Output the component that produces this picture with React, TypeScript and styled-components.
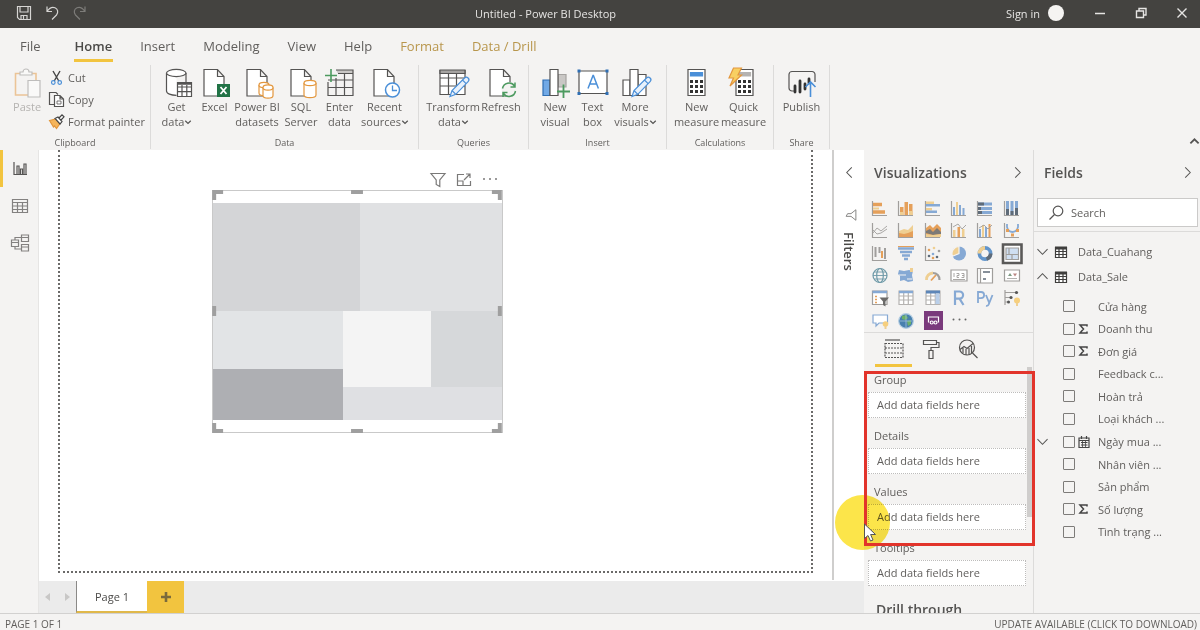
import React from "react";
import styled, { createGlobalStyle } from "styled-components";

const c = {
  title: "#444340",
  bar: "#f4f3f2",
  line: "#dcdbda",
  text: "#605e5c",
  ink: "#555453",
  blue: "#4a8fd8",
  orange: "#e3973e",
  yellow: "#f2c43f",
  green: "#4c9a5f",
};

const GlobalStyle = createGlobalStyle`
  * { box-sizing: border-box; }
  body { margin: 0; background: ${c.bar}; color: ${c.text}; font: 11px/15px "Open Sans", "Noto Sans", sans-serif; }
  button { font: inherit; color: inherit; background: none; border: 0; padding: 0; margin: 0; }
  svg { display: block; fill: none; flex: none; overflow: visible; }
  h2, h3 { margin: 0; }
  ul { margin: 0; padding: 0; list-style: none; }
`;

const Shell = styled.div`
  display: flex;
  flex-direction: column;
  height: 100vh;
  min-height: 480px;
  overflow: hidden;
`;

/* ---------- title bar ---------- */
const TitleBar = styled.header`
  display: grid;
  grid-template-columns: 1fr auto 1fr;
  align-items: center;
  height: 28px;
  flex: none;
  padding: 0 9px 2px 16px;
  background: ${c.title};
  color: #e6e5e3;
`;
const QuickAccess = styled.div`
  display: flex;
  gap: 12px;
`;
const WindowControls = styled.div`
  display: flex;
  align-items: center;
  justify-content: flex-end;
`;
const SignIn = styled.button`
  display: flex;
  align-items: center;
  gap: 8px;
  margin-right: 27px;
`;
const Avatar = styled.span`
  width: 16px;
  height: 16px;
  border-radius: 50%;
  background: #f5f4f2;
`;
const WindowButton = styled.button`
  display: grid;
  place-items: center;
  width: 18px;
  height: 20px;
  & + & { margin-left: 23px; }
`;
const DocTitle = styled.div`
  padding-right: 116px;
  white-space: nowrap;
`;

/* ---------- ribbon ---------- */
const Tabs = styled.nav`
  display: flex;
  align-items: flex-start;
  gap: 26px;
  height: 37px;
  flex: none;
  padding: 7px 0 0 19px;
  font-size: 13px;
  line-height: 22px;
`;
const Tab = styled.button<{ $active?: boolean; $accent?: boolean }>`
  height: 27px;
  padding: 0 1px 5px;
  font-weight: ${(p) => (p.$active ? 600 : 400)};
  color: ${(p) => (p.$accent ? "#b8964c" : p.$active ? "#4b4a48" : c.text)};
  border-bottom: 3px solid ${(p) => (p.$active ? c.yellow : "transparent")};
`;
const FileTab = styled(Tab)`
  margin-right: 6px;
`;
const Ribbon = styled.div`
  display: flex;
  align-items: stretch;
  height: 85px;
  flex: none;
`;
const Group = styled.section<{ $w: number }>`
  display: flex;
  flex-direction: column;
  align-items: center;
  justify-content: space-between;
  width: ${(p) => p.$w}px;
  margin-bottom: 1px;
  border-right: 1px solid ${c.line};
`;
const Tools = styled.div`
  display: flex;
`;
const GroupName = styled.div`
  font-size: 9px;
  line-height: 12px;
`;
const Tool = styled.button<{ $w: number; $dim?: boolean }>`
  display: flex;
  flex-direction: column;
  align-items: center;
  width: ${(p) => p.$w}px;
  padding-top: 2px;
  gap: 2px;
  white-space: nowrap;
  color: ${(p) => (p.$dim ? "#b5b3b1" : c.text)};
`;
const ToolText = styled.span`
  display: flex;
  flex-direction: column;
  align-items: center;
`;
const ToolLine = styled.span`
  display: flex;
  align-items: center;
  gap: 1px;
`;
const ClipList = styled.div`
  display: flex;
  flex-direction: column;
  padding-top: 1px;
`;
const ClipButton = styled.button`
  display: flex;
  align-items: center;
  gap: 4px;
  height: 22px;
`;
const Collapse = styled.button`
  margin: auto 1px 4px auto;
`;

/* ---------- workspace ---------- */
const Workspace = styled.main`
  display: flex;
  flex: 1;
  min-height: 0;
`;
const Rail = styled.nav`
  display: flex;
  flex-direction: column;
  width: 39px;
  flex: none;
  border-right: 1px solid #e6e5e4;
`;
const RailButton = styled.button<{ $active?: boolean }>`
  display: grid;
  place-items: center;
  height: 37px;
  padding-right: 2px;
  border-left: 3px solid ${(p) => (p.$active ? c.yellow : "transparent")};
`;
const Center = styled.div`
  display: flex;
  flex-direction: column;
  flex: 1;
  min-width: 0;
`;
const Stage = styled.div`
  display: flex;
  flex: 1;
  min-height: 0;
  background: #fff;
`;
const CanvasArea = styled.div`
  flex: 1;
  padding: 0 19px 7px 19px;
  border-right: 2px solid #cfcecd;
  margin-bottom: 1px;
`;
const ReportPage = styled.div`
  position: relative;
  height: 100%;
  border: 2px dotted #6b6a69;
  border-top: 0;
`;
const Visual = styled.div`
  position: absolute;
  left: 152px;
  top: 40px;
  width: 291px;
  height: 243px;
  padding: 12px 0;
  border: 1px solid #c9c9c9;
`;
const VisualActions = styled.div`
  position: absolute;
  right: 4px;
  top: -19px;
  display: flex;
  align-items: center;
  gap: 11px;
`;
const Handles = styled.svg`
  position: absolute;
  left: -1px;
  top: -1px;
  width: 291px;
  height: 243px;
`;
const TreeMap = styled.div`
  display: flex;
  flex-direction: column;
  height: 217px;
`;
const Split = styled.div<{ $size: number; $dir?: "row" | "column" }>`
  display: flex;
  flex: ${(p) => p.$size} 1 0;
  flex-direction: ${(p) => p.$dir ?? "row"};
`;
const Cell = styled.div<{ $size: number; $tone: string }>`
  flex: ${(p) => p.$size} 1 0;
  background: ${(p) => p.$tone};
`;
const Filters = styled.aside`
  display: flex;
  flex-direction: column;
  align-items: center;
  width: 30px;
  flex: none;
  padding-top: 17px;
`;
const FilterMark = styled.span`
  margin: 31px 0 11px 3px;
  transform: rotate(90deg);
`;
const FiltersTitle = styled.h2`
  writing-mode: vertical-rl;
  font-size: 13px;
  line-height: 16px;
  font-weight: 600;
  color: #4b4a48;
`;
const PageTabs = styled.div`
  display: flex;
  height: 32px;
  flex: none;
  background: #ebebeb;
`;
const PageArrows = styled.div`
  display: flex;
  align-items: center;
  justify-content: space-around;
  width: 37px;
`;
const PageTab = styled.button`
  width: 71px;
  background: #fff;
  border-left: 1px solid #8a8987;
  border-bottom: 2px solid #e0b84a;
  color: #4b4a48;
`;
const AddPage = styled.button`
  display: grid;
  place-items: center;
  width: 37px;
  background: ${c.yellow};
`;

/* ---------- side panels ---------- */
const VizPanel = styled.aside`
  position: relative;
  display: flex;
  flex-direction: column;
  width: 169px;
  flex: none;
`;
const PanelHead = styled.div`
  display: flex;
  align-items: center;
  justify-content: space-between;
  height: 45px;
  flex: none;
  padding: 0 10px 0 10px;
`;
const FieldsHead = styled(PanelHead)`
  padding-right: 7px;
`;
const PanelTitle = styled.h2`
  font-size: 14px;
  line-height: 20px;
  font-weight: 600;
  color: ${c.ink};
`;
const VizGrid = styled.div`
  display: grid;
  grid-template-columns: repeat(6, 1fr);
  grid-auto-rows: 1fr;
  height: 138px;
  flex: none;
  padding: 3px 8px 0 3px;
  border-bottom: 1px solid ${c.line};
`;
const VizButton = styled.button`
  display: grid;
  place-items: center;
`;
const PaneTabs = styled.div`
  display: flex;
  height: 34px;
  flex: none;
  padding: 1px 0 0 11px;
`;
const PaneTab = styled.button<{ $active?: boolean }>`
  display: grid;
  place-items: center;
  width: 37px;
  border-bottom: 3px solid ${(p) => (p.$active ? c.yellow : "transparent")};
`;
const Wells = styled.div`
  display: flex;
  flex: 1;
  min-height: 0;
  overflow: hidden;
`;
const WellList = styled.div`
  flex: 1;
  padding: 5px 0 0 4px;
`;
const WellLabel = styled.h3`
  padding: 0 0 4px 6px;
  font-size: 11px;
  line-height: 16px;
  font-weight: 400;
`;
const Well = styled.div`
  height: 26px;
  margin-bottom: 10px;
  padding: 0 8px;
  line-height: 24px;
  background: #fff;
  border: 1px dotted #bdbcbb;
`;
const DrillTitle = styled.h2`
  padding: 5px 0 0 8px;
  font-size: 14px;
  line-height: 18px;
  font-weight: 600;
  color: ${c.ink};
`;
const Scrollbar = styled.div`
  width: 5px;
  height: 150px;
  margin: 0 1px;
  background: #cfcdcc;
`;
const Highlight = styled.div`
  position: absolute;
  left: 0;
  top: 221px;
  width: 171px;
  height: 175px;
  border: 3px solid #e2342b;
  z-index: 2;
`;
const ClickSpot = styled.div`
  position: absolute;
  left: -29px;
  top: 345px;
  width: 55px;
  height: 55px;
  border-radius: 50%;
  background: #fce54a;
  mix-blend-mode: multiply;
  z-index: 1;
`;
const Pointer = styled.svg`
  position: absolute;
  left: 0;
  top: 373px;
  width: 12px;
  height: 19px;
  z-index: 3;
`;
const FieldsPanel = styled.aside`
  width: 167px;
  flex: none;
  border-left: 1px solid ${c.line};
`;
const SearchRow = styled.div`
  padding: 3px 2px 4px 3px;
  border-bottom: 1px solid ${c.line};
`;
const SearchBox = styled.label`
  display: flex;
  align-items: center;
  gap: 7px;
  height: 29px;
  padding-left: 11px;
  background: #fff;
  border: 1px solid #cbcac9;
`;
const SearchInput = styled.input`
  width: 100px;
  padding: 0;
  border: 0;
  outline: 0;
  background: none;
  font: inherit;
  color: ${c.text};
  &::placeholder { color: ${c.text}; opacity: 1; }
`;
const Tables = styled.div`
  padding-top: 7px;
`;
const TableRow = styled.button`
  display: grid;
  grid-template-columns: 18px 23px auto;
  align-items: center;
  justify-content: start;
  width: 100%;
  height: 25px;
  padding-left: 3px;
  text-align: left;
`;
const FieldList = styled.ul`
  display: grid;
  grid-auto-rows: 1fr;
  height: 248px;
  margin-top: 6px;
`;
const Field = styled.li`
  display: grid;
  grid-template-columns: 26px 1fr;
  align-items: center;
  padding-left: 3px;
`;
const FieldLabel = styled.label`
  display: grid;
  grid-template-columns: 15px 20px auto;
  align-items: center;
  justify-content: start;
  white-space: nowrap;
`;
const Check = styled.input`
  appearance: none;
  width: 12px;
  height: 12px;
  margin: 0;
  border: 1px solid #7d7b79;
  border-radius: 1px;
`;
const Status = styled.footer`
  display: flex;
  justify-content: space-between;
  height: 17px;
  flex: none;
  padding: 2px 3px 0 5px;
  border-top: 1px solid #d2d1d0;
  font-size: 10px;
  line-height: 16px;
`;

/* ---------- icons ---------- */
const Svg = ({ w = 30, h = 30, children, stroke = c.ink }: { w?: number; h?: number; stroke?: string; children: React.ReactNode }) => (
  <svg width={w} height={h} viewBox={`0 0 ${w} ${h}`} stroke={stroke} strokeWidth="1.2" aria-hidden="true">
    {children}
  </svg>
);
const Chevron = ({ dir, w = 11, bold }: { dir: "left" | "right" | "up" | "down"; w?: number; bold?: boolean }) => {
  const turn = { right: 0, down: 90, left: 180, up: 270 }[dir];
  return (
    <svg width={w} height={w} viewBox="0 0 12 12" stroke={c.ink} strokeWidth={bold ? 2.4 : 1.1} aria-hidden="true">
      <path d="M3.5 0.5 9 6 3.5 11.5" transform={`rotate(${turn} 6 6)`} />
    </svg>
  );
};
const Sheet = () => <path d="M4 2.5H17.5L24 9.5V29H4ZM17.5 2.5V9.5H24" fill="#fff" />;
const Cylinder = ({ x, y, w, h, stroke }: { x: number; y: number; w: number; h: number; stroke?: string }) => (
  <g stroke={stroke} fill="#fff">
    <path d={`M${x} ${y}v${h}a${w / 2} 2.6 0 0 0 ${w} 0v${-h}`} />
    <ellipse cx={x + w / 2} cy={y} rx={w / 2} ry="2.6" />
  </g>
);
const Pencil = () => (
  <g stroke={c.blue} fill="#e8f1fb">
    <path d="M12 29.5 14 23.5 26.5 11a2.3 2.3 0 0 1 3.6 3.6L17.8 27.3ZM14 23.5l3.8 3.8M24.5 13l3.6 3.6" />
  </g>
);
const GridSheet = () => (
  <>
    <path d="M2 3.5H27V27.5H2ZM2 11H27M2 19H27M10.5 7V27.5M18.5 7V27.5" fill="#fff" />
    <path d="M2 3H27V6.5H2Z" fill="#a5a3a1" />
  </>
);
const Calculator = ({ screen = c.blue }: { screen?: string }) => (
  <>
    <path d="M6 2.5H23V28.5H6Z" fill="#fff" />
    <path d="M8.5 5.5H20.5V9H8.5Z" fill={screen} stroke={screen} />
    {[13, 18, 23].map((y) => [8, 13, 18].map((x) => <rect key={`${x}-${y}`} x={x} y={y} width="3" height="3" fill="#333" stroke="none" />))}
  </>
);

const toolIcons: Record<string, React.ReactNode> = {
  paste: (
    <g opacity="0.5">
      <path d="M3.5 6.5H24V28H3.5Z" stroke={c.orange} strokeWidth="1.6" />
      <path d="M8 8V5h3a3 3 0 0 1 6 0h3v3Z" fill="#fff" stroke="#8a8987" />
      <path d="M16 13.5H28V30H16Z" fill="#fff" stroke="#8a8987" />
    </g>
  ),
  get: (
    <>
      <path d="M4.5 6V24c0 2.5 4.5 4 10 4V6" fill="#fff" stroke="none" />
      <path d="M4.5 6V24c0 2.6 4.5 4.3 10 4.3M24 6V15" />
      <ellipse cx="14.25" cy="6" rx="9.75" ry="3.6" fill="#fff" />
      <path d="M15.5 15.5H29.5V29.5H15.5ZM15.5 20H29.5M15.5 24.7H29.5M20 18V29.5M24.8 18V29.5" fill="#fff" />
      <path d="M15.5 16.5H29.5" strokeWidth="2.5" />
    </>
  ),
  excel: (
    <>
      <Sheet />
      <rect x="17" y="17" width="13" height="13" fill="#217346" stroke="none" />
      <path d="m20.5 20 6 7M26.5 20l-6 7" stroke="#fff" strokeWidth="1.8" />
    </>
  ),
  datasets: (
    <g transform="translate(1 0)">
      <Sheet />
      <Cylinder x={16} y={18} w={10} h={8} stroke={c.orange} />
      <Cylinder x={20} y={20.5} w={10} h={8} stroke={c.orange} />
    </g>
  ),
  sql: (
    <g transform="translate(1 0)">
      <Sheet />
      <Cylinder x={17} y={16} w={12} h={12} stroke={c.orange} />
    </g>
  ),
  enter: (
    <>
      <path d="M3 15V28.5H28V7M3 13H28M3 20.5H28M11 11V28.5M19.5 7V28.5" fill="none" />
      <path d="M11 3H28V6.5H13" fill="#c9c7c5" />
      <path d="M0 8.5H12M6 2V15" stroke={c.green} strokeWidth="1.6" />
    </>
  ),
  recent: (
    <>
      <Sheet />
      <circle cx="22.5" cy="23" r="7" fill="#fff" stroke={c.blue} strokeWidth="1.5" />
      <path d="M22.5 18.5V23.5H27" stroke={c.blue} strokeWidth="1.3" />
    </>
  ),
  transform: (
    <>
      <GridSheet />
      <Pencil />
    </>
  ),
  refresh: (
    <>
      <Sheet />
      <circle cx="23" cy="22.5" r="7.5" fill={c.bar} stroke="none" />
      <path d="M16.5 21.5a6.6 6.6 0 0 1 12-2.5M29 15.5V20H24.5M29.5 24a6.6 6.6 0 0 1-12 2.5M17 30V25.5H21.5" stroke={c.green} strokeWidth="1.5" />
    </>
  ),
  visual: (
    <>
      <path d="M3 13H10V28.5H3Z" fill="#71a9e6" stroke="#2f6fb4" />
      <path d="M18 7.5H26V20H18Z" fill="#c9c7c5" stroke="#a5a3a1" />
      <path d="M10 2.5H18V28.5H10Z" fill="#fff" />
      <path d="M17 24.5H30M23.5 17.5V31" stroke={c.green} strokeWidth="1.8" />
    </>
  ),
  text: (
    <>
      <path d="M1 4H29V26.5H1Z" fill="#fff" />
      <path d="m10 21.5 5-13h.4l5 13M11.7 17h7" stroke={c.blue} strokeWidth="1.5" />
      {[[1, 4], [29, 4], [1, 26.5], [29, 26.5]].map(([x, y]) => (
        <rect key={`${x}-${y}`} x={x - 1.5} y={y - 1.5} width="3" height="3" fill="#2f6fb4" stroke="none" />
      ))}
    </>
  ),
  more: (
    <>
      <path d="M3 13H10V28.5H3ZM18 7.5H26V28.5H18Z" fill="#fff" />
      <path d="M10 2.5H18V28.5H10Z" fill="#fff" />
      <Pencil />
    </>
  ),
  calc: <Calculator />,
  quick: (
    <>
      <g transform="translate(1 0)">
        <Calculator screen="#b5b3b1" />
      </g>
      <path d="M4.500 1H12.500L9 8H12.500L1 19 4.500 11H0Z" fill="#f8cf62" stroke={c.orange} />
    </>
  ),
  publish: (
    <>
      <path d="M9 24H5A3 3 0 0 1 2 21V7.5A3 3 0 0 1 5 4.5H25A3 3 0 0 1 28 7.5V15" />
      <path d="M8 19V25M13 14V25M18 17V22M22 12V16" stroke="#333" strokeWidth="2.8" strokeLinecap="round" />
      <path d="M23.5 30V15M18.5 20 23.5 15 28.5 20" stroke={c.blue} strokeWidth="1.6" />
    </>
  ),
};

const clipIcons: Record<string, React.ReactNode> = {
  cut: (
    <>
      <path d="M4 1 9.8 11M11 1 5.2 11" stroke="#444" strokeWidth="1.4" />
      <circle cx="4.3" cy="12.5" r="1.8" stroke={c.blue} />
      <circle cx="10.7" cy="12.5" r="1.8" stroke={c.blue} />
    </>
  ),
  copy: (
    <>
      <path d="M5 12.5H.5V.5H7L9 2.5" />
      <path d="M5.5 3.5H11L14.5 7V14.5H5.5ZM11 3.5V7H14.5" fill="#fff" />
      <path d="M8 9H12V12H8Z" strokeWidth=".8" />
    </>
  ),
  painter: (
    <>
      <path d="M.5 6.500 7 5 11 9.500 7.500 14.500 5.500 12 4.500 13Z" fill="#f5b55c" stroke={c.orange} />
      <path d="m6 4.5 3-1.500 4 4.500-2 2.500ZM10 4 13 .8 15 2.8 12 6" fill="#fff" stroke="#444" />
    </>
  ),
};

const O = "#e5a05a";
const B = "#86a9d4";
const Y = "#efcf92";
const G = "#a09e9c";
const D = "#5f6b78";
const axes = <path d="M1.5 1V15.5H16" stroke={G} />;
const hbars = (rows: [number, number, string][]) =>
  rows.map(([y, w, f], i) => <rect key={i} x="2" y={y} width={w} height="2.5" fill={f} stroke="none" />);
const vbars = (cols: [number, number, string][], bw = 2) =>
  cols.map(([x, h, f], i) => <rect key={i} x={x} y={15 - h} width={bw} height={h} fill={f} stroke="none" />);
const sheetGrid = <path d="M2 2H16V15.5H2ZM2 7H16M2 11H16M6.7 3V15.5M11.3 3V15.5" stroke="#b5b3b1" fill="#fff" />;

const vizIcons: [string, React.ReactNode][] = [
  ["Stacked bar chart", <>{axes}<path d="M2 4.5H11M2 12H14" stroke={O} strokeWidth="3.5" /><path d="M2 8.5H8" stroke={Y} strokeWidth="2" /></>],
  ["Stacked column chart", <>{axes}{vbars([[3, 8, O], [7.5, 13, O], [12, 11, O]], 3.5)}{vbars([[3, 3, Y], [12, 4, Y]], 3.5)}</>],
  ["Clustered bar chart", <>{axes}{hbars([[1.5, 8, Y], [4, 14, B], [8, 6, Y], [10.5, 11, B]])}</>],
  ["Clustered column chart", <>{axes}{vbars([[3, 8, B], [6, 13, Y], [9, 10, B], [12.5, 7, B]], 2)}</>],
  ["100% stacked bar chart", <>{axes}<path d="M2 4H16M2 8.5H16M2 12.5H16" stroke={B} strokeWidth="3" /><path d="M2 4H8M2 12.5H6M2 8.5H5" stroke={D} strokeWidth="3" /></>],
  ["100% stacked column chart", <>{axes}<path d="M4.5 1V15M9 1V15M13.5 1V15" stroke={B} strokeWidth="3" /><path d="M4.5 9V15M9 11V15M13.5 8V15" stroke={D} strokeWidth="3" /></>],
  ["Line chart", <>{axes}<path d="m2 11 4-5 4 3 6-5M2 8l4 4 4-1 6-4" stroke={G} strokeWidth=".9" /></>],
  ["Area chart", <>{axes}<path d="M2 15V9L7 7l4 1 5-5V15Z" fill={Y} stroke="none" /><path d="M2 15V11l5 1 4-1 5-2v6Z" fill={O} stroke="none" /></>],
  ["Stacked area chart", <>{axes}<path d="M2 6 6 3 9 6l4-4 4 4V15H2Z" fill={O} stroke="none" /><path d="m2 9 4-2 3 3 4-4 4 4v2L9 13 2 11Z" fill="#7d7a76" stroke="none" /><path d="m2 12 7 1 8-1v3H2Z" fill={Y} stroke="none" /></>],
  ["Line and stacked column chart", <>{axes}{vbars([[3, 7, Y], [7.5, 10, O], [12, 8, Y]], 2.5)}<path d="m3 5 5-3 4 5 4-4" stroke={G} strokeWidth=".9" /></>],
  ["Line and clustered column chart", <>{axes}{vbars([[3, 8, B], [6, 12, Y], [9, 10, B], [12.5, 13, O]], 2)}<path d="m3 6 5-3 4 4 4-4" stroke={G} strokeWidth=".9" /></>],
  ["Ribbon chart", <>{axes}<path d="M4 2V5c1 4 3 5 5.500 5s4.500-1 5.500-5V2" stroke={B} strokeWidth="1.8" /><path d="M3 8.500H6M8 13h3M13 8.500h3" stroke={O} strokeWidth="3" /></>],
  ["Waterfall chart", <>{axes}<path d="M4.5 2V12M8.5 2V8M14 3V14" stroke={G} strokeWidth="2" /><path d="M11 6V13" stroke={O} strokeWidth="2" /></>],
  ["Funnel", <><path d="M1 3.5H17M3 7H15" stroke={B} strokeWidth="2.6" /><path d="M1 1.5H17" stroke={O} strokeWidth="1" /><path d="M5 10.5H13M7 14H11" stroke={B} strokeWidth="2.3" /></>],
  ["Scatter chart", <>{axes}{[[5, 5, O], [5, 11, D], [9, 9, B], [10, 3, Y], [13, 12, D], [15, 6, G], [9, 13, O]].map(([x, y, f], i) => <circle key={i} cx={x} cy={y} r="1.3" fill={String(f)} stroke="none" />)}</>],
  ["Pie chart", <><circle cx="9" cy="8.5" r="7" fill={B} stroke="none" /><path d="M9 8.5V1.5A7 7 0 0 0 2.5 11.2Z" fill={Y} stroke={c.bar} /></>],
  ["Donut chart", <><circle cx="9" cy="8.5" r="5.6" stroke="#6295cb" strokeWidth="3.6" /><path d="M9 2.9A5.6 5.6 0 0 0 3.4 8.5" stroke={Y} strokeWidth="3.6" /><path d="M14.6 8.5A5.6 5.6 0 0 1 10.5 13.9" stroke={D} strokeWidth="3.6" /></>],
  ["Treemap", <><path d="M0 -.500H18.500V18H0Z" fill="#fff" stroke="#5a5958" strokeWidth="2.6" /><path d="M3 3H15.5V14.5H3ZM3 9.5H15.5M6 3V9.5M9 9.5V14.500" stroke={G} fill="#cfdff2" /></>],
  ["Map", <g stroke="#6f9aa8"><circle cx="9" cy="8.5" r="7" /><ellipse cx="9" cy="8.5" rx="3.3" ry="7" /><path d="M2 8.5H16M3 5H15M3 12H15" strokeWidth=".9" /></g>],
  ["Filled map", <><path d="M2 3 7 4l5-1 4 1-1 4 1 6-5 1-4-2-4 1V9L1 7Z" fill={B} stroke="none" /><path d="M2 8H9M10 12H15" stroke="#f6f5f4" /><path d="M13 1h3v4h-3Z" fill={Y} stroke="none" /></>],
  ["Gauge", <><path d="M2.5 13A6.5 6.5 0 0 1 9 6" stroke={Y} strokeWidth="2.8" /><path d="M9 6a6.5 6.5 0 0 1 6.500 7" stroke={G} strokeWidth="2.200" /><path d="M7 13.500 12 8" stroke={O} strokeWidth="1.8" /></>],
  ["Card", <><path d="M1 3H17V14H1Z" stroke={G} fill="#fff" /><path d="M4 6V10M6.5 6.5H9V8.5H7V10.500H9M11.500 6.5H14V10.500H11.500M12 8.5H14M3 12.500H15" stroke={G} strokeWidth=".9" /></>],
  ["Multi-row card", <><path d="M1.5 1.5H16.5V16H1.5ZM4.5 1.5V16" stroke={G} fill="#fff" /><path d="M7 5H14M7 12H10" stroke={D} strokeWidth="1.600" /></>],
  ["KPI", <><path d="M1.5 3H16.5V14H1.5Z" stroke={G} fill="#fff" /><path d="m5 9 2-3 2 3Z" fill="#7f9c85" stroke="none" /><path d="m10 6.5 2 3 2-3Z" fill="#b98582" stroke="none" /><path d="M4 11.500H14" stroke={G} strokeWidth=".8" /></>],
  ["Slicer", <><path d="M1.5 2H16V15.5H1.5Z" stroke={G} fill="#fff" /><path d="M1.5 3H16" stroke={B} strokeWidth="2.5" /><path d="M4 7.5H6M4 10.500H6M4 13.500H6" stroke={O} strokeWidth="1.5" /><path d="M8.500 8.500H18L14.500 12.500V17.500L12 16V12.500Z" fill="#6b6a69" stroke="none" /></>],
  ["Table", <>{sheetGrid}<path d="M2 3H16" stroke={B} strokeWidth="2.5" /></>],
  ["Matrix", <>{sheetGrid}<path d="M2 3H16" stroke="#5d86b8" strokeWidth="3" /><path d="M13.500 5V15" stroke="#b9cfea" strokeWidth="4" /></>],
  ["R script visual", <path d="M5 16V2.5H9.500a3.600 3.600 0 0 1 0 7.200H5M9.500 9.700 13.500 16" stroke={B} strokeWidth="2.2" />],
  ["Python visual", <path d="M2 14V3H5a3 3 0 0 1 0 6.200H2M10 6l3 7.500M16.500 6 12.600 15.600q-.800 1.600-2.600 1.200" stroke={B} strokeWidth="1.8" />],
  ["Key influencers", <><path d="M2 1V16M2 3.500H13M2 8.500H9M2 13H7" stroke={G} /><circle cx="13.500" cy="3.500" r="1.600" fill="#555" stroke="none" /><circle cx="8" cy="8.500" r="1.600" fill="#555" stroke="none" /><circle cx="5.500" cy="13" r="1.500" fill="#555" stroke="none" /><circle cx="14" cy="11.500" r="3" fill="#f6cf7e" stroke="none" /><path d="M14 14V17" stroke={Y} strokeWidth="2" /></>],
  ["Q&A", <><path d="M2 3H16.500V11H8L5 14V11H2Z" stroke={B} fill="#fff" /><circle cx="14.500" cy="12" r="2.800" fill="#f6cf7e" stroke="none" /><path d="M14.500 14V17" stroke={Y} strokeWidth="2" /></>],
  ["ArcGIS map", <><circle cx="9" cy="9" r="7.300" fill="#4880ae" stroke="#b4cde2" /><path d="M5 4 9 3l2 3-3 2-3-1ZM10 9l4-1v4l-3 2Z" fill="#6cb168" stroke="none" /><path d="M3 9H15M9 2V16" stroke="#9fc0dc" strokeWidth=".8" /></>],
  ["Power Apps", <><rect x="0" y="-1" width="19" height="19" fill="#7a3a7c" stroke="none" /><path d="M4.500 10.500V5H14.500V10.500" stroke="#fff" /><circle cx="7.700" cy="10.500" r="1.500" stroke="#fff" /><circle cx="11.500" cy="10.500" r="1.500" stroke="#fff" /></>],
  ["Get more visuals", <g fill="#666" stroke="none"><circle cx="3.500" cy="7.500" r="1" /><circle cx="9.500" cy="7.500" r="1" /><circle cx="15.500" cy="7.500" r="1" /></g>],
];

const TableGlyph = () => (
  <Svg w={12} h={12} stroke="#3f3e3d">
    <path d="M.5 1V11.500H11.500V1M.5 5.500H11.500M.5 8.500H11.500M4 3V11.500M8 3V11.500" fill="#fff" />
    <path d="M0 2H12" strokeWidth="3" />
  </Svg>
);
const FunnelGlyph = ({ w }: { w: number }) => (
  <svg width={w} height={w} viewBox="0 0 16 16" stroke="#7a7978" strokeWidth="1.2" aria-hidden="true">
    <path d="M1 1.500H15L9.800 8V14.500L6.200 12.500V8Z" />
  </svg>
);

/* ---------- data ---------- */
type ToolDef = { icon: string; w: number; lines: string[]; menu?: boolean };
const groups: { name: string; w: number; tools: ToolDef[] }[] = [
  {
    name: "Data",
    w: 268,
    tools: [
      { icon: "get", w: 38, lines: ["Get", "data"], menu: true },
      { icon: "excel", w: 38, lines: ["Excel"] },
      { icon: "datasets", w: 47, lines: ["Power BI", "datasets"] },
      { icon: "sql", w: 41, lines: ["SQL", "Server"] },
      { icon: "enter", w: 36, lines: ["Enter", "data"] },
      { icon: "recent", w: 54, lines: ["Recent", "sources"], menu: true },
    ],
  },
  {
    name: "Queries",
    w: 110,
    tools: [
      { icon: "transform", w: 55, lines: ["Transform", "data"], menu: true },
      { icon: "refresh", w: 41, lines: ["Refresh"] },
    ],
  },
  {
    name: "Insert",
    w: 138,
    tools: [
      { icon: "visual", w: 38, lines: ["New", "visual"] },
      { icon: "text", w: 37, lines: ["Text", "box"] },
      { icon: "more", w: 48, lines: ["More", "visuals"], menu: true },
    ],
  },
  {
    name: "Calculations",
    w: 107,
    tools: [
      { icon: "calc", w: 47, lines: ["New", "measure"] },
      { icon: "quick", w: 47, lines: ["Quick", "measure"] },
    ],
  },
  { name: "Share", w: 56, tools: [{ icon: "publish", w: 44, lines: ["Publish"] }] },
];

const fields: { name: string; kind?: "sum" | "date" }[] = [
  { name: "Cửa hàng" },
  { name: "Doanh thu", kind: "sum" },
  { name: "Đơn giá", kind: "sum" },
  { name: "Feedback c..." },
  { name: "Hoàn trả" },
  { name: "Loại khách ..." },
  { name: "Ngày mua ...", kind: "date" },
  { name: "Nhân viên ..." },
  { name: "Sản phẩm" },
  { name: "Số lượng", kind: "sum" },
  { name: "Tình trạng ..." },
];

export default function App() {
  return (
    <Shell>
      <GlobalStyle />
      <TitleBar>
        <QuickAccess>
          <button aria-label="Save">
            <Svg w={16} h={16} stroke="#d6d5d3">
              <path d="M1.500 1.500H14.500V14.500H3.500L1.500 12.500ZM4 1.500V7H12V1.500M5 14.500V10.500H11V14.500M7.500 11V14" />
            </Svg>
          </button>
          <button aria-label="Undo">
            <Svg w={16} h={16} stroke="#d6d5d3">
              <path d="M3 1.500V6.500H8M3.200 6.300C5 3.500 8 1.500 11 2.700c3 1.300 3.500 5 1.500 7.300L8 14.500" />
            </Svg>
          </button>
          <button aria-label="Redo">
            <Svg w={16} h={16} stroke="#7d7c79">
              <path d="M13 1.500V6.500H8M12.800 6.300C11 3.500 8 1.500 5 2.700c-3 1.300-3.500 5-1.500 7.300L8 14.500" />
            </Svg>
          </button>
        </QuickAccess>
        <DocTitle>Untitled - Power BI Desktop</DocTitle>
        <WindowControls>
          <SignIn>
            Sign in <Avatar />
          </SignIn>
          <WindowButton aria-label="Minimize">
            <Svg w={12} h={12} stroke="#e6e5e3"><path d="M1 6.500H11" strokeWidth="1.5" /></Svg>
          </WindowButton>
          <WindowButton aria-label="Restore">
            <Svg w={12} h={12} stroke="#e6e5e3"><path d="M1.500 4H8.500V10.500H1.500ZM4 4V1.500H11V8H8.500" strokeWidth="1.4" /></Svg>
          </WindowButton>
          <WindowButton aria-label="Close">
            <Svg w={12} h={12} stroke="#e6e5e3"><path d="m1.500 1.500 9 9M10.500 1.500l-9 9" strokeWidth="1.4" /></Svg>
          </WindowButton>
        </WindowControls>
      </TitleBar>

      <Tabs>
        <FileTab>File</FileTab>
        <Tab $active>Home</Tab>
        <Tab>Insert</Tab>
        <Tab>Modeling</Tab>
        <Tab>View</Tab>
        <Tab>Help</Tab>
        <Tab $accent>Format</Tab>
        <Tab $accent>Data / Drill</Tab>
      </Tabs>

      <Ribbon>
        <Group $w={151}>
          <Tools>
            <Tool $w={44} $dim>
              <Svg>{toolIcons.paste}</Svg>
              <ToolText>Paste</ToolText>
            </Tool>
            <ClipList>
              <ClipButton><Svg w={15} h={15}>{clipIcons.cut}</Svg>Cut</ClipButton>
              <ClipButton><Svg w={15} h={15}>{clipIcons.copy}</Svg>Copy</ClipButton>
              <ClipButton><Svg w={15} h={15}>{clipIcons.painter}</Svg>Format painter</ClipButton>
            </ClipList>
          </Tools>
          <GroupName>Clipboard</GroupName>
        </Group>
        {groups.map((g) => (
          <Group key={g.name} $w={g.w}>
            <Tools>
              {g.tools.map((t) => (
                <Tool key={t.icon} $w={t.w}>
                  <Svg>{toolIcons[t.icon]}</Svg>
                  <ToolText>
                    {t.lines.map((line, i) => (
                      <ToolLine key={line}>
                        {line}
                        {t.menu && i === 1 && <Chevron dir="down" w={6} bold />}
                      </ToolLine>
                    ))}
                  </ToolText>
                </Tool>
              ))}
            </Tools>
            <GroupName>{g.name}</GroupName>
          </Group>
        ))}
        <Collapse aria-label="Collapse ribbon"><Chevron dir="up" w={9} bold /></Collapse>
      </Ribbon>

      <Workspace>
        <Rail>
          <RailButton $active aria-label="Report">
            <Svg w={16} h={16}><path d="M2 1V13.500H15M5 13V5H7V13M8.500 13V8H10.500V13M12 13V3H14V13" /></Svg>
          </RailButton>
          <RailButton aria-label="Data">
            <Svg w={16} h={16} stroke="#838180"><path d="M.5 1.500H15.500V14.500H.5ZM.5 4.500H15.500M.5 8H15.500M.5 11.500H15.500M5.500 4.500V14.500M10.500 4.500V14.500" /></Svg>
          </RailButton>
          <RailButton aria-label="Model">
            <Svg w={18} h={18} stroke="#838180"><path d="M.5 6H7.500V12.500H.5ZM.5 8.500H7.500M10.500 1H17.500V7.500H10.500ZM10.500 3.500H17.500M10.500 10.500H17.500V17H10.500ZM10.500 13H17.500M4 6V3.500H10.500M4 12.500V15H10.500" /></Svg>
          </RailButton>
        </Rail>

        <Center>
          <Stage>
            <CanvasArea>
              <ReportPage>
                <Visual>
                  <VisualActions>
                    <FunnelGlyph w={16} />
                    <Svg w={14} h={14} stroke="#7a7978"><path d="M7 1.500H.5V12.500H13.500V8M.5 8H6V12.500M7 7 13 1M9 1H13V5" /></Svg>
                    <Svg w={16} h={14} stroke="none"><g fill="#7a7978"><circle cx="2" cy="6" r="1" /><circle cx="8" cy="6" r="1" /><circle cx="14" cy="6" r="1" /></g></Svg>
                  </VisualActions>
                  <TreeMap>
                    <Split $size={108}>
                      <Cell $size={147} $tone="#d4d5d7" />
                      <Cell $size={142} $tone="#e0e1e3" />
                    </Split>
                    <Split $size={109}>
                      <Split $size={130} $dir="column">
                        <Cell $size={58} $tone="#e2e4e6" />
                        <Cell $size={51} $tone="#aeafb3" />
                      </Split>
                      <Split $size={159} $dir="column">
                        <Split $size={76}>
                          <Cell $size={88} $tone="#f4f4f4" />
                          <Cell $size={71} $tone="#d6d8da" />
                        </Split>
                        <Cell $size={33} $tone="#dfe0e3" />
                      </Split>
                    </Split>
                  </TreeMap>
                  <Handles viewBox="0 0 293 245" stroke="#9f9f9f" strokeWidth="4">
                    <path d="M2 10V2H11M140 2H152M282 2H290V10M2 117V127M290 117V127M2 235V243H11M140 243H152M282 243H290V235" />
                  </Handles>
                </Visual>
              </ReportPage>
            </CanvasArea>
            <Filters>
              <button aria-label="Expand filters"><Chevron dir="left" /></button>
              <FilterMark><FunnelGlyph w={12} /></FilterMark>
              <FiltersTitle>Filters</FiltersTitle>
            </Filters>
          </Stage>
          <PageTabs>
            <PageArrows>
              <Svg w={6} h={8} stroke="none"><path d="M5 0V8L0 4Z" fill="#c8c7c6" /></Svg>
              <Svg w={6} h={8} stroke="none"><path d="M1 0V8L6 4Z" fill="#c8c7c6" /></Svg>
            </PageArrows>
            <PageTab>Page 1</PageTab>
            <AddPage aria-label="New page">
              <Svg w={12} h={12}><path d="M6 1V11M1 6H11" stroke="#7a6a3c" strokeWidth="2.6" /></Svg>
            </AddPage>
          </PageTabs>
        </Center>

        <VizPanel>
          <PanelHead>
            <PanelTitle>Visualizations</PanelTitle>
            <button aria-label="Collapse visualizations"><Chevron dir="right" /></button>
          </PanelHead>
          <VizGrid>
            {vizIcons.map(([name, art]) => (
              <VizButton key={name} aria-label={name}>
                <Svg w={18} h={18}>{art}</Svg>
              </VizButton>
            ))}
          </VizGrid>
          <PaneTabs>
            <PaneTab $active aria-label="Fields">
              <Svg w={20} h={20}>
                <path d="M1 1H16" />
                <path d="M1 4.500H19V18.500H1ZM1 9H19M1 14H19" strokeDasharray="2 1" />
              </Svg>
            </PaneTab>
            <PaneTab aria-label="Format">
              <Svg w={20} h={20}><path d="M2.500 1.500H15.500V5.500H2.500ZM15.500 3.500H18V8.500H10V11.500M8 11.500H12V19.500H8Z" /></Svg>
            </PaneTab>
            <PaneTab aria-label="Analytics">
              <Svg w={20} h={20}><circle cx="9" cy="8.500" r="7.500" /><path d="m14.500 14 5 5M2 10.500 6 7.500l3 2 6-5M5 9V14M8 10V16M11 9V15.500M13.500 7V14" /></Svg>
            </PaneTab>
          </PaneTabs>
          <Wells>
            <WellList>
              {["Group", "Details", "Values", "Tooltips"].map((name) => (
                <React.Fragment key={name}>
                  <WellLabel>{name}</WellLabel>
                  <Well>Add data fields here</Well>
                </React.Fragment>
              ))}
              <DrillTitle>Drill through</DrillTitle>
            </WellList>
            <Scrollbar />
          </Wells>
          <ClickSpot />
          <Highlight />
          <Pointer viewBox="0 0 12 19" stroke="#555" strokeWidth="1">
            <path d="M.5 1V15.500L4 12.500 6.500 18 9 17 6.600 11.500H11.500Z" fill="#fff" />
          </Pointer>
        </VizPanel>

        <FieldsPanel>
          <FieldsHead>
            <PanelTitle>Fields</PanelTitle>
            <button aria-label="Collapse fields"><Chevron dir="right" /></button>
          </FieldsHead>
          <SearchRow>
            <SearchBox>
              <Svg w={15} h={15}><circle cx="9" cy="6" r="4.8" /><path d="M5.500 9.500.5 14.500" /></Svg>
              <SearchInput type="text" placeholder="Search" aria-label="Search" />
            </SearchBox>
          </SearchRow>
          <Tables>
            <TableRow><Chevron dir="down" /><TableGlyph />Data_Cuahang</TableRow>
            <TableRow><Chevron dir="up" /><TableGlyph />Data_Sale</TableRow>
          </Tables>
          <FieldList>
            {fields.map((f) => (
              <Field key={f.name}>
                <span>{f.kind === "date" && <Chevron dir="down" />}</span>
                <FieldLabel>
                  <Check type="checkbox" />
                  <span>
                    {f.kind === "sum" && (
                      <Svg w={10} h={10} stroke="#444"><path d="M9 2.500V1H2L5.500 5 2 9H9V7.500" strokeWidth="1.5" /></Svg>
                    )}
                    {f.kind === "date" && (
                      <Svg w={12} h={12} stroke="#444"><path d="M1 2H11V11.500H1ZM1 4.500H11M3.500 0V3M8.500 0V3M3 6.500H9.500M3 9H9.500" /><path d="M4.500 5V11M7.500 5V11" strokeWidth=".8" /></Svg>
                    )}
                  </span>
                  {f.name}
                </FieldLabel>
              </Field>
            ))}
          </FieldList>
        </FieldsPanel>
      </Workspace>

      <Status>
        <span>PAGE 1 OF 1</span>
        <span>UPDATE AVAILABLE (CLICK TO DOWNLOAD)</span>
      </Status>
    </Shell>
  );
}
